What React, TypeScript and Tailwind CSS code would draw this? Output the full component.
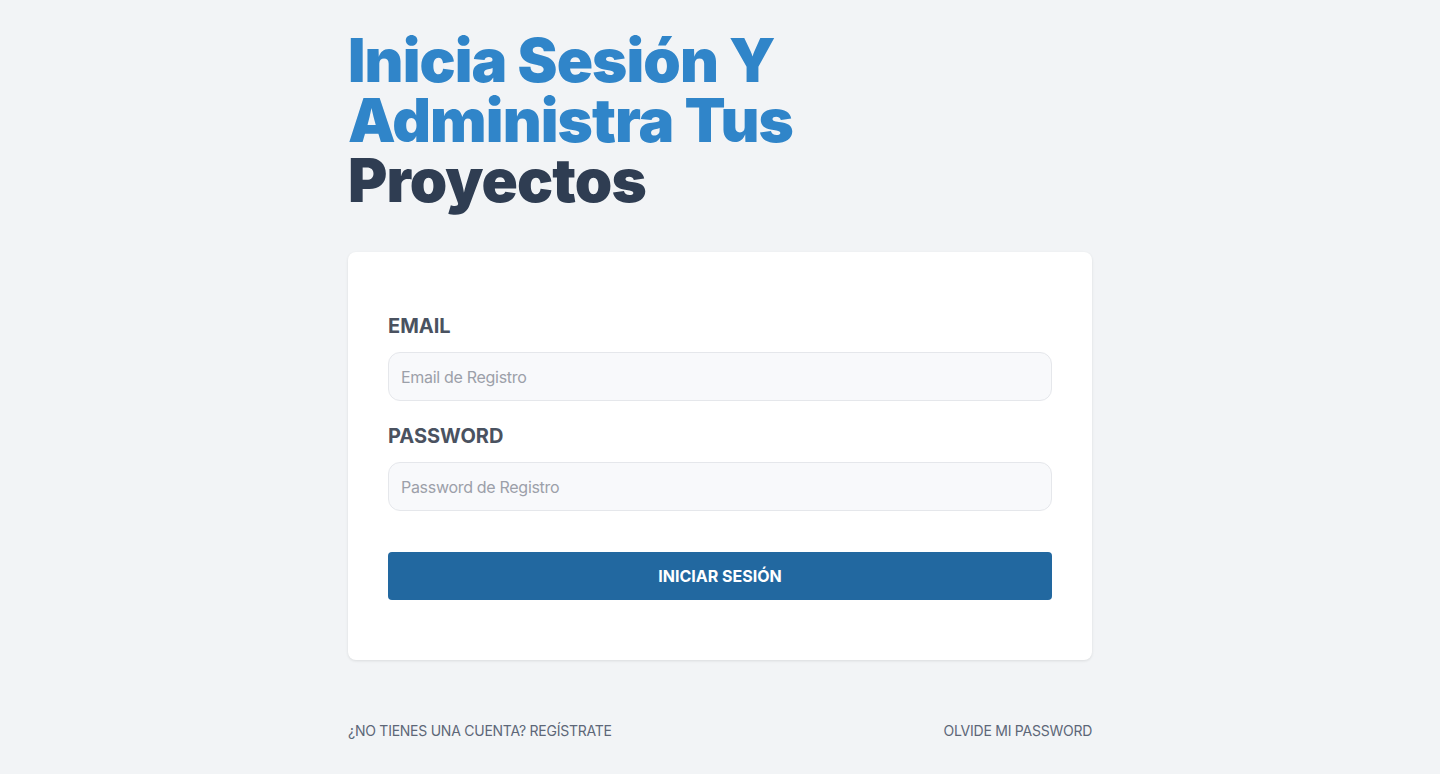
const Login = () => {
  return (
    <div className="min-h-screen bg-[#f2f4f6] font-['Inter',sans-serif]">
      <main className="mx-auto w-[744px] pt-[30px]">
        {/* Heading */}
        <h1 className="text-[60px] leading-[60px] font-black tracking-[-0.9px] text-[#3085c9]">
          Inicia Sesión Y<br />
          Administra Tus <span className="text-[#2f3d52]">Proyectos</span>
        </h1>

        {/* Card */}
        <form className="mt-[42px] rounded-lg bg-white px-10 py-[60px] shadow-[0_1px_3px_rgba(0,0,0,0.1)]">
          <div>
            <label className="block text-xl font-bold uppercase text-[#4a5260]">Email</label>
            <input
              type="email"
              placeholder="Email de Registro"
              className="mt-3 h-[49px] w-full rounded-xl border border-[#e5e7eb] bg-[#f8f9fb] px-3 text-base tracking-[-0.3px] outline-none placeholder:text-[#9ca0a9]"
            />
          </div>
          <div className="mt-[21px]">
            <label className="block text-xl font-bold uppercase text-[#4a5260]">Password</label>
            <input
              type="password"
              placeholder="Password de Registro"
              className="mt-3 h-[49px] w-full rounded-xl border border-[#e5e7eb] bg-[#f8f9fb] px-3 text-base tracking-[-0.3px] outline-none placeholder:text-[#9ca0a9]"
            />
          </div>
          <button
            type="button"
            className="mt-[41px] h-12 w-full rounded bg-[#2268a0] text-base font-bold uppercase text-white"
          >
            Iniciar Sesión
          </button>
        </form>

        {/* Links */}
        <nav className="mt-[61px] flex justify-between text-sm uppercase tracking-[-0.25px] text-[#5d6778]">
          <a href="#">¿No tienes una cuenta? Regístrate</a>
          <a href="#">Olvide mi Password</a>
        </nav>
      </main>
    </div>
  );
};

export default function App() {
  return <Login />;
}
